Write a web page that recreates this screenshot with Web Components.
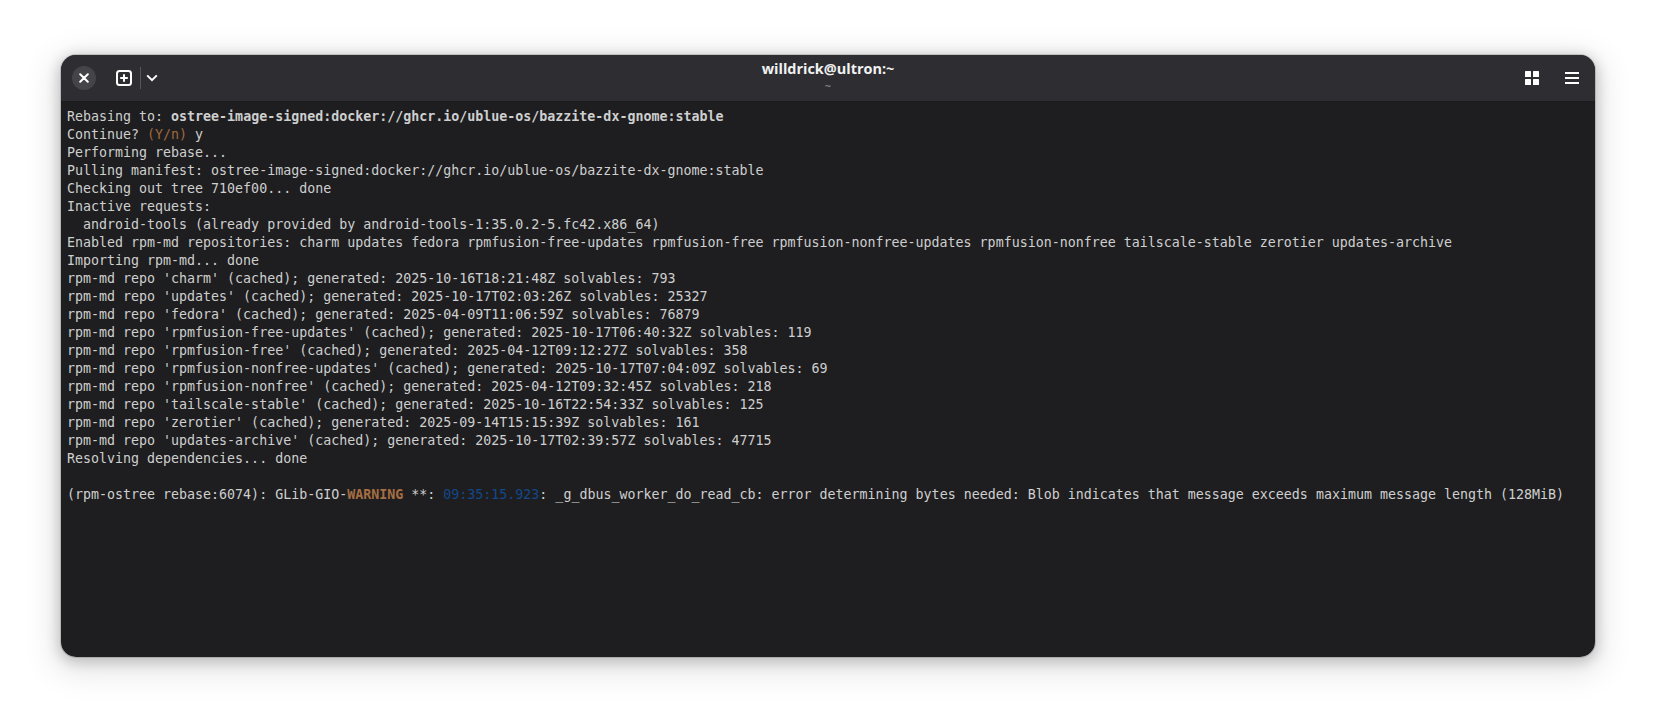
<!DOCTYPE html>
<html><head><meta charset="utf-8">
<style>html,body{margin:0;background:#fff;height:100%}</style>
</head><body>
<term-window><term-header slot="header" title-text="willdrick@ultron:~" subtitle="~"></term-header><term-line>Rebasing to: <b>ostree-image-signed:docker://ghcr.io/ublue-os/bazzite-dx-gnome:stable</b></term-line><term-line>Continue? <span style="color:#a0693f">(Y/n)</span> y</term-line><term-line>Performing rebase...</term-line><term-line>Pulling manifest: ostree-image-signed:docker://ghcr.io/ublue-os/bazzite-dx-gnome:stable</term-line><term-line>Checking out tree 710ef00... done</term-line><term-line>Inactive requests:</term-line><term-line>  android-tools (already provided by android-tools-1:35.0.2-5.fc42.x86_64)</term-line><term-line>Enabled rpm-md repositories: charm updates fedora rpmfusion-free-updates rpmfusion-free rpmfusion-nonfree-updates rpmfusion-nonfree tailscale-stable zerotier updates-archive</term-line><term-line>Importing rpm-md... done</term-line><term-line>rpm-md repo 'charm' (cached); generated: 2025-10-16T18:21:48Z solvables: 793</term-line><term-line>rpm-md repo 'updates' (cached); generated: 2025-10-17T02:03:26Z solvables: 25327</term-line><term-line>rpm-md repo 'fedora' (cached); generated: 2025-04-09T11:06:59Z solvables: 76879</term-line><term-line>rpm-md repo 'rpmfusion-free-updates' (cached); generated: 2025-10-17T06:40:32Z solvables: 119</term-line><term-line>rpm-md repo 'rpmfusion-free' (cached); generated: 2025-04-12T09:12:27Z solvables: 358</term-line><term-line>rpm-md repo 'rpmfusion-nonfree-updates' (cached); generated: 2025-10-17T07:04:09Z solvables: 69</term-line><term-line>rpm-md repo 'rpmfusion-nonfree' (cached); generated: 2025-04-12T09:32:45Z solvables: 218</term-line><term-line>rpm-md repo 'tailscale-stable' (cached); generated: 2025-10-16T22:54:33Z solvables: 125</term-line><term-line>rpm-md repo 'zerotier' (cached); generated: 2025-09-14T15:15:39Z solvables: 161</term-line><term-line>rpm-md repo 'updates-archive' (cached); generated: 2025-10-17T02:39:57Z solvables: 47715</term-line><term-line>Resolving dependencies... done</term-line><term-line></term-line><term-line>(rpm-ostree rebase:6074): GLib-GIO-<b style="color:#a66e42">WARNING</b> **: <span style="color:#12488b">09:35:15.923</span>: _g_dbus_worker_do_read_cb: error determining bytes needed: Blob indicates that message exceeds maximum message length (128MiB)</term-line></term-window>
<script>
class TermWindow extends HTMLElement{
  constructor(){super();this.attachShadow({mode:'open'}).innerHTML=`
  <style>
  :host{display:block;box-sizing:border-box;height:724px;padding:55px 61px 67px}
  .win{height:100%;display:flex;flex-direction:column;border-radius:15px;overflow:hidden;background:#1e1e20}
  .shadow{height:100%;border-radius:15px;box-shadow:0 0 0 1px rgba(0,0,0,.14),0 3px 14px 2px rgba(0,0,0,.2),0 8px 32px 8px rgba(0,0,0,.1)}
  .content{flex:1;padding:6px 6px 0;font:13.3px/18px "DejaVu Sans Mono",monospace;color:#cfcfcf;overflow:hidden}
  </style>
  <div class="shadow"><div class="win"><slot name="header"></slot><div class="content"><slot></slot></div></div></div>`;}
}
class TermLine extends HTMLElement{
  constructor(){super();this.attachShadow({mode:'open'}).innerHTML=`<style>:host{display:block;height:18px;white-space:pre}</style><slot></slot>`;}
}
class IconButton extends HTMLElement{
  constructor(){super();this.attachShadow({mode:'open'}).innerHTML=`
  <style>:host{display:inline-flex;align-items:center;justify-content:center;flex:none}
  svg{display:block}</style><slot></slot>`;}
}
class TermHeader extends HTMLElement{
  constructor(){super();const t=this.getAttribute('title-text'),s=this.getAttribute('subtitle');
  this.attachShadow({mode:'open'}).innerHTML=`
  <style>
  :host{display:grid;grid-template-columns:1fr auto 1fr;align-items:center;box-sizing:border-box;height:47px;padding-bottom:1px;flex:none;background:#2e2e32;box-shadow:inset 0 -1px 0 #1a1a1c;color:#fff}
  .left{display:flex;align-items:center;padding-left:11px}
  .close{width:24px;height:24px;border-radius:50%;background:#454549;margin-right:16px}
  .new{width:24px;height:24px}
  .sep{width:1px;height:22px;background:#55555a;margin:0 0 0 4px}
  .chev{width:22px;height:24px}
  .mid{display:flex;flex-direction:column;align-items:center}
  .t{font:700 14.45px/18px "Open Sans","Noto Sans",sans-serif;color:#f2f2f2;margin-top:-3px}
  .s{font:400 11px/14px "Open Sans","Noto Sans",sans-serif;color:#9a9a9d;margin-top:1px}
  .right{display:flex;align-items:center;justify-content:flex-end;padding-right:16px;gap:26px}
  </style>
  <div class="left">
    <icon-button class="close"><svg width="10" height="10" viewBox="0 0 10 10"><path d="M1.2 1.2L8.8 8.8M8.8 1.2L1.2 8.8" stroke="#fff" stroke-width="2" stroke-linecap="round"/></svg></icon-button>
    <icon-button class="new"><svg width="16" height="16" viewBox="0 0 16 16"><rect x="1" y="1" width="14" height="14" rx="2.5" fill="none" stroke="#fff" stroke-width="2"/><path d="M8 4.2V11.8M4.2 8H11.8" stroke="#fff" stroke-width="2"/></svg></icon-button>
    <div class="sep"></div>
    <icon-button class="chev"><svg width="12" height="8" viewBox="0 0 12 8"><path d="M1.2 1.4L6 6.2L10.8 1.4" fill="none" stroke="#fff" stroke-width="2"/></svg></icon-button>
  </div>
  <div class="mid"><div class="t">${t}</div><div class="s">${s}</div></div>
  <div class="right">
    <icon-button><svg width="14" height="14" viewBox="0 0 14 14" fill="#fff"><rect width="6" height="6" rx=".6"/><rect x="8" width="6" height="6" rx=".6"/><rect y="8" width="6" height="6" rx=".6"/><rect x="8" y="8" width="6" height="6" rx=".6"/></svg></icon-button>
    <icon-button><svg width="14" height="12" viewBox="0 0 14 12" fill="#fff"><rect width="14" height="2"/><rect y="5" width="14" height="2"/><rect y="10" width="14" height="2"/></svg></icon-button>
  </div>`;}
}
customElements.define('icon-button',IconButton);
customElements.define('term-header',TermHeader);
customElements.define('term-line',TermLine);
customElements.define('term-window',TermWindow);
</script>
</body></html>
